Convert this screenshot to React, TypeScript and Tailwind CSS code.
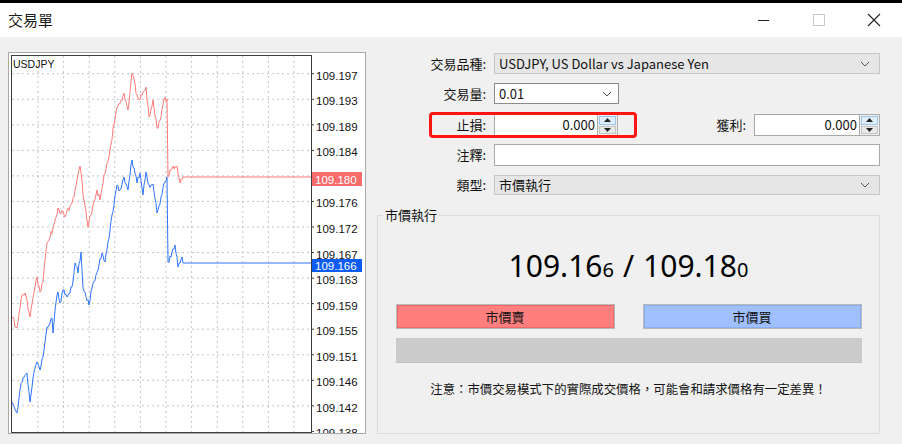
import React from "react";

const mulberry32 = (a: number) => () => {
  a |= 0;
  a = (a + 0x6d2b79f5) | 0;
  let t = Math.imul(a ^ (a >>> 15), 1 | a);
  t = (t + Math.imul(t ^ (t >>> 7), 61 | t)) ^ t;
  return ((t ^ (t >>> 14)) >>> 0) / 4294967296;
};

const askKeys: [number, number][] = [
  [12, 318], [17, 328], [22, 295], [25, 293], [30, 317], [35, 287], [37, 277], [40, 292], [43, 282],
  [47, 243], [50, 237], [53, 228], [58, 208], [65, 217], [72, 203], [77, 180], [80, 166], [84, 200],
  [88, 227], [93, 205], [97, 190], [100, 200], [104, 175], [110, 150], [114, 125], [117, 107],
  [121, 100], [124, 93], [128, 110], [132, 73], [137, 95], [140, 100], [143, 92], [146, 87],
  [149, 117], [153, 100], [157, 128], [161, 117], [164, 99], [167, 99], [168, 177], [170, 170],
  [173, 166], [177, 166], [180, 183], [183, 177], [311, 177],
];

const bidKeys: [number, number][] = [
  [12, 402], [17, 413], [20, 390], [23, 378], [27, 373], [30, 402], [33, 378], [37, 362], [40, 370],
  [43, 357], [47, 327], [52, 318], [53, 333], [55, 310], [58, 292], [60, 303], [63, 290], [67, 297],
  [72, 287], [75, 263], [78, 273], [81, 252], [83, 288], [89, 305], [93, 283], [98, 270], [102, 253],
  [105, 262], [110, 230], [117, 185], [120, 190], [124, 177], [128, 190], [132, 160], [137, 183],
  [140, 173], [143, 195], [146, 172], [149, 185], [153, 184], [157, 213], [161, 197], [165, 182],
  [167, 177], [168, 262], [172, 252], [175, 245], [178, 267], [182, 257], [183, 263], [311, 263],
];

const buildLine = (keys: [number, number][], seed: number) => {
  const rand = mulberry32(seed);
  const pts: string[] = [];
  for (let i = 0; i < keys.length - 1; i++) {
    const [x0, y0] = keys[i];
    const [x1, y1] = keys[i + 1];
    pts.push(`${x0},${y0}`);
    if (x0 < 183 && x1 - x0 > 1) {
      for (let x = x0 + 1; x < x1; x++) {
        const t = (x - x0) / (x1 - x0);
        const y = y0 + (y1 - y0) * t + (rand() - 0.5) * 6;
        pts.push(`${x},${y.toFixed(1)}`);
      }
    }
  }
  const last = keys[keys.length - 1];
  pts.push(`${last[0]},${last[1]}`);
  return pts.join(" ");
};

const priceLabels = [
  "109.197", "109.193", "109.189", "109.184", "", "109.176", "109.172", "109.167",
  "109.163", "109.159", "109.155", "109.151", "109.146", "109.142", "109.138",
];

const Chart = () => {
  const vx = [0, 1, 2, 3, 4, 5, 6, 7, 8, 9, 10].map((k) => 38 + k * 25.6);
  const hy = priceLabels.map((_, k) => 73.7 + k * 25.55);
  return (
    <div className="ml-2 mt-[15px] h-[382px] w-[358px] shrink-0 border border-[#a9a9a9] bg-white">
      <svg width="356" height="380" viewBox="9 53 356 380" className="block">
        {vx.map((x) => (
          <line key={x} x1={x} y1={56} x2={x} y2={432} stroke="#c4c4c4" strokeDasharray="2 3" />
        ))}
        {hy.slice(0, 14).map((y) => (
          <line key={y} x1={12} y1={y} x2={311} y2={y} stroke="#c4c4c4" strokeDasharray="2 3" />
        ))}
        <polyline points={buildLine(askKeys, 7)} fill="none" stroke="#ff7a7a" strokeWidth="1" />
        <polyline points={buildLine(bidKeys, 11)} fill="none" stroke="#2f74ff" strokeWidth="1" />
        <rect x={11.5} y={55.5} width={300} height={377} fill="none" stroke="#3c3c3c" />
        {hy.map((y) => (
          <line key={`t${y}`} x1={311} y1={y} x2={314} y2={y} stroke="#3c3c3c" />
        ))}
        <text x={13} y={68} fontSize="10.5" fontFamily="'Liberation Sans', Arial, sans-serif" fill="#111">
          USDJPY
        </text>
        {priceLabels.map((p, k) =>
          p ? (
            <text key={p} x={316} y={hy[k] + 6} fontSize="11.5" fontFamily="'Liberation Sans', Arial, sans-serif" fill="#111">
              {p}
            </text>
          ) : null
        )}
        <rect x={312} y={172} width={50} height={14} fill="#f86b6b" />
        <text x={315} y={183.5} fontSize="11.5" fontFamily="'Liberation Sans', Arial, sans-serif" fill="#fff">
          109.180
        </text>
        <rect x={312} y={259} width={50} height={13} fill="#0a5cf5" />
        <text x={315} y={269.5} fontSize="11.5" fontFamily="'Liberation Sans', Arial, sans-serif" fill="#fff">
          109.166
        </text>
      </svg>
    </div>
  );
};

const Chevron = () => (
  <svg width="10" height="6" viewBox="0 0 10 6" className="shrink-0">
    <polyline points="1,1 5,5 9,1" fill="none" stroke="#555" strokeWidth="1" />
  </svg>
);

const Spinner = () => (
  <div className="flex h-full w-[20px] shrink-0 flex-col gap-px border border-l-0 border-[#adadad] bg-[#f0f0f0] p-px">
    <div className="flex flex-1 items-center justify-center border border-[#9cc6ea] bg-[#e0eefb]">
      <svg width="7" height="4" viewBox="0 0 7 4"><polygon points="0,4 3.5,0 7,4" fill="#222" /></svg>
    </div>
    <div className="flex flex-1 items-center justify-center border border-[#c4c4c4] bg-[#e8e8e8]">
      <svg width="7" height="4" viewBox="0 0 7 4"><polygon points="0,0 3.5,4 7,0" fill="#222" /></svg>
    </div>
  </div>
);

const Label = ({ children }: { children: React.ReactNode }) => (
  <div className="w-[117px] shrink-0 pr-2 text-right">{children}</div>
);

const App: React.FC = () => {
  return (
    <div
      className="flex h-[444px] w-[902px] flex-col overflow-hidden bg-[#f0f0f0] text-[13px] text-[#111]"
      style={{ fontFamily: "'Noto Sans CJK TC', 'Noto Sans', sans-serif" }}
    >
      {/* top strip */}
      <div className="h-[3px] shrink-0 bg-black" />

      {/* title bar */}
      <div className="flex h-[34px] shrink-0 items-center bg-white">
        <div className="ml-2 text-[15px] text-[#1a1a1a]">交易單</div>
        <div className="ml-auto flex h-full pr-px">
          <div className="flex w-[55px] items-center justify-center">
            <div className="h-px w-[11px] bg-[#222]" />
          </div>
          <div className="flex w-[55px] items-center justify-center">
            <div className="h-[12px] w-[12px] border border-[#c8c8c8]" />
          </div>
          <div className="flex w-[55px] items-center justify-center">
            <svg width="14" height="14" viewBox="0 0 14 14">
              <path d="M1 1 L13 13 M13 1 L1 13" stroke="#222" strokeWidth="1.1" />
            </svg>
          </div>
        </div>
      </div>

      {/* body */}
      <div className="flex flex-1">
        <Chart />

        <div className="ml-[11px] flex w-[503px] flex-col pt-[16px]">
          {/* symbol */}
          <div className="flex h-[21px] items-center">
            <Label>交易品種:</Label>
            <div className="flex h-full flex-1 items-center border border-[#c6c6c6] bg-[#e6e6e6] pl-1 pr-[9px]">
              <span className="flex-1">USDJPY, US Dollar vs Japanese Yen</span>
              <Chevron />
            </div>
          </div>

          {/* volume */}
          <div className="mt-[9px] flex h-[21px] items-center">
            <Label>交易量:</Label>
            <div className="flex h-full w-[125px] items-center border border-[#8a8a8a] bg-white pl-1 pr-[6px]">
              <span className="flex-1">0.01</span>
              <Chevron />
            </div>
          </div>

          {/* SL / TP */}
          <div className="relative mt-[10px] flex h-[22px] items-center">
            <Label>止損:</Label>
            <div className="flex h-full w-[104px] items-center justify-end border border-[#a8a8a8] bg-white pr-[2px]">
              0.000
            </div>
            <Spinner />
            <div className="ml-auto flex h-full items-center">
              <span className="pr-2">獲利:</span>
              <div className="flex h-full w-[106px] items-center justify-end border border-[#a8a8a8] bg-white pr-[2px]">
                0.000
              </div>
              <Spinner />
            </div>
            <div className="absolute -top-[2px] left-[52px] h-[26px] w-[208px] rounded-[4px] border-[3px] border-[#ff1414]" />
          </div>

          {/* comment */}
          <div className="mt-[8px] flex h-[22px] items-center">
            <Label>注釋:</Label>
            <div className="h-full flex-1 border border-[#a8a8a8] bg-white" />
          </div>

          {/* type */}
          <div className="mt-[9px] flex h-[20px] items-center">
            <Label>類型:</Label>
            <div className="flex h-full flex-1 items-center border border-[#c6c6c6] bg-[#e6e6e6] pl-1 pr-[9px]">
              <span className="flex-1">市價執行</span>
              <Chevron />
            </div>
          </div>

          {/* group box */}
          <div className="relative mt-[20px] h-[219px] border border-[#dcdcdc]">
            <div className="absolute -top-[10px] left-[5px] bg-[#f0f0f0] px-[2px] leading-[18px]">市價執行</div>
            <div
              className="mt-[30px] flex h-[40px] items-baseline justify-center pt-[2px] text-black"
              style={{ fontFamily: "'Noto Sans', 'Open Sans', sans-serif" }}
            >
              <span className="text-[30px] leading-[36px]">109.16</span>
              <span className="text-[20px]">6</span>
              <span className="px-[9px] text-[30px] leading-[36px]">/</span>
              <span className="text-[30px] leading-[36px]">109.18</span>
              <span className="text-[20px]">0</span>
            </div>
            <div className="mx-auto w-[466px]">
              <div className="mt-[18px] flex h-[25px] justify-between">
                <div className="flex w-[219px] items-center justify-center border border-[#b8b8b8] bg-[#ff7f7f] shadow-[inset_0_0_0_1px_#ee6a6a]">
                  市價賣
                </div>
                <div className="flex w-[219px] items-center justify-center border border-[#b8b8b8] bg-[#a0bfff] shadow-[inset_0_0_0_1px_#8aaef5]">
                  市價買
                </div>
              </div>
              <div className="mt-[9px] h-[25px] border-b border-[#c0c0c0] bg-[#cbcbcb]" />
              <div className="mt-[16px] text-center text-[12.4px] leading-[20px]">
                注意：市價交易模式下的實際成交價格，可能會和請求價格有一定差異！
              </div>
            </div>
          </div>
        </div>
      </div>
    </div>
  );
};

export default App;
